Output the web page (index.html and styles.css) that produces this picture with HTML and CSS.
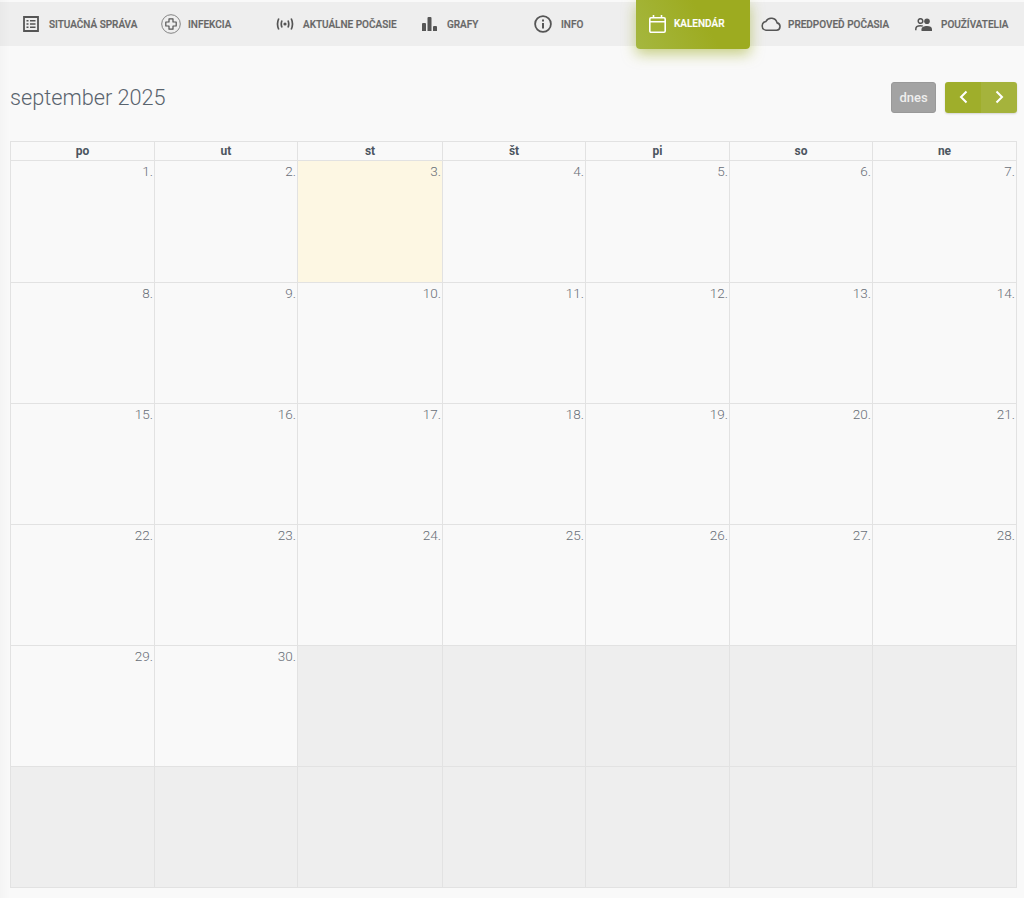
FILE: index.html
```html
<!DOCTYPE html>
<html lang="sk">
<head>
<meta charset="utf-8">
<title>Kalendár</title>
<link rel="stylesheet" href="styles.css">
</head>
<body>
<nav class="nav">
  <a class="item w1"><svg class="ic" width="16" height="16" viewBox="0 0 16 16"><path fill="none" stroke="#555" stroke-width="1.800" d="M1 1h14v14H1z"/><path fill="#555" d="M3.500 4h2v1.600h-2zM7 4h5.500v1.600H7zM3.500 7.200h2v1.600h-2zM7 7.200h5.500v1.600H7zM3.500 10.400h2V12h-2zM7 10.400h5.500V12H7z"/></svg><span>Situačná správa</span></a>
  <a class="item w2"><svg class="ic" width="20" height="20" viewBox="0 0 20 20"><circle cx="10" cy="10" r="9.300" fill="none" stroke="#777" stroke-width=".9"/><path fill="none" stroke="#555" stroke-width="1.200" stroke-linejoin="round" d="M8 4.800h4V8h3.200v4H12v3.200H8V12H4.800V8H8z"/></svg><span>Infekcia</span></a>
  <a class="item w3"><svg class="ic" width="18" height="12" viewBox="0 0 18 12"><circle cx="9" cy="6" r="1.600" fill="#555"/><path fill="none" stroke="#555" stroke-width="1.700" d="M6 2.500Q4.500 6 6 9.500M12 2.500Q13.500 6 12 9.500M2.800.5Q.2 6 2.800 11.500M15.200.5Q17.800 6 15.200 11.500"/></svg><span>Aktuálne počasie</span></a>
  <a class="item w4"><svg class="ic" width="15" height="14" viewBox="0 0 15 14"><path fill="#555" d="M0 7a1 1 0 0 1 1-1h2a1 1 0 0 1 1 1v7H0zM5.500 1a1 1 0 0 1 1-1h2a1 1 0 0 1 1 1v13h-4zM11 10a1 1 0 0 1 1-1h2a1 1 0 0 1 1 1v4h-4z"/></svg><span>Grafy</span></a>
  <a class="item w5"><svg class="ic" width="18" height="18" viewBox="0 0 18 18"><circle cx="9" cy="9" r="7.900" fill="none" stroke="#555" stroke-width="1.800"/><path fill="#555" d="M8 8h2v5.500H8zM8 4.500h2v2H8z"/></svg><span>Info</span></a>
  <a class="item active"><svg class="ic" width="17" height="18" viewBox="0 0 17 18"><path fill="none" stroke="#fff" stroke-width="1.600" d="M2 2.800h13a1.200 1.200 0 0 1 1.200 1.200v12a1.200 1.200 0 0 1-1.200 1.200H2A1.200 1.200 0 0 1 .8 16V4A1.200 1.200 0 0 1 2 2.800zM.8 6.800h15.400M4.500 0v3.500M12.500 0v3.500"/></svg><span>Kalendár</span></a>
  <a class="item w7"><svg class="ic" width="20" height="14" viewBox="0 0 20 14"><path fill="none" stroke="#555" stroke-width="1.600" d="M5 13.200h10.500a3.700 3.700 0 0 0 .6-7.300A6 6 0 0 0 4.900 4.500 4.400 4.400 0 0 0 5 13.200z"/></svg><span>Predpoveď počasia</span></a>
  <a class="item w8"><svg class="ic" width="17" height="13" viewBox="0 0 17 13"><circle cx="5.500" cy="3" r="2.300" fill="none" stroke="#555" stroke-width="1.500"/><circle cx="12" cy="3.200" r="2.800" fill="#555"/><path fill="none" stroke="#555" stroke-width="1.500" d="M.8 12.300v-1.300c0-2 2-3.200 4.700-3.200 1 0 1.700.1 2.300.4"/><path fill="#555" d="M6.500 13v-1.800c0-2 2.500-3.200 5.500-3.200s5 1.200 5 3.200V13z"/></svg><span>Používatelia</span></a>
</nav>
<main class="main">
  <header class="toolbar">
    <h1 class="title">september 2025</h1>
    <div class="actions">
      <button class="btn today">dnes</button>
      <div class="group">
        <button class="btn arrow"><svg width="9" height="14" viewBox="0 0 9 14"><path fill="none" stroke="#fff" stroke-width="2" d="M7.500 1.500 2 7l5.500 5.500"/></svg></button>
        <button class="btn arrow light"><svg width="9" height="14" viewBox="0 0 9 14"><path fill="none" stroke="#fff" stroke-width="2" d="M1.500 1.500 7 7l-5.500 5.500"/></svg></button>
      </div>
    </div>
  </header>
  <table class="cal">
    <thead><tr><th>po</th><th>ut</th><th>st</th><th>št</th><th>pi</th><th>so</th><th>ne</th></tr></thead>
    <tbody>
      <tr><td>1.</td><td>2.</td><td class="now">3.</td><td>4.</td><td>5.</td><td>6.</td><td>7.</td></tr>
      <tr><td>8.</td><td>9.</td><td>10.</td><td>11.</td><td>12.</td><td>13.</td><td>14.</td></tr>
      <tr><td>15.</td><td>16.</td><td>17.</td><td>18.</td><td>19.</td><td>20.</td><td>21.</td></tr>
      <tr><td>22.</td><td>23.</td><td>24.</td><td>25.</td><td>26.</td><td>27.</td><td>28.</td></tr>
      <tr><td>29.</td><td>30.</td><td class="off"></td><td class="off"></td><td class="off"></td><td class="off"></td><td class="off"></td></tr>
      <tr><td class="off"></td><td class="off"></td><td class="off"></td><td class="off"></td><td class="off"></td><td class="off"></td><td class="off"></td></tr>
    </tbody>
  </table>
</main>
</body>
</html>
```
FILE: styles.css
```css
* { box-sizing: border-box; }
html, body { margin: 0; height: 898px; overflow: hidden; }
body { background: linear-gradient(90deg, #f4f4f4, #f9f9f9 10px); font-family: Roboto, "Liberation Sans", sans-serif; color: #555; }
.nav { display: flex; height: 44px; margin-top: 2px; background: linear-gradient(90deg, #e9e9e9, #eee 10px); align-items: center; padding-left: 23px; }
.item { display: flex; align-items: center; gap: 10px; font-size: 10px; font-weight: 500; -webkit-text-stroke: .2px currentColor; text-transform: uppercase; color: #666; white-space: nowrap; }
.w1 { width: 138px; }
.w2 { width: 115px; gap: 7px; }
.w3 { width: 146px; gap: 9px; }
.w4 { width: 112px; }
.w5 { width: 102px; gap: 9px; }
.w7 { width: 154px; gap: 7px; }
.w8 { gap: 9px; }
.active { width: 114px; height: 49px; margin: -2px 11px 3px 0; align-self: flex-start; padding: 0 0 2px 13px; gap: 8px; border-radius: 0 0 4px 4px; color: #fff; background: linear-gradient(60deg, #a5b73f, #9dab20 60%); box-shadow: 0 5px 14px rgba(157, 171, 32, .55); position: relative; }
.main { padding: 0 7px 0 10px; }
.toolbar { display: flex; justify-content: space-between; align-items: center; height: 95px; padding-top: 8px; }
.title { margin: 0; font-size: 21.700px; font-weight: 300; color: #5a646e; }
.actions { display: flex; gap: 9px; align-items: center; padding-bottom: 1px; }
.btn { border: 0; height: 31px; font: 500 13px Roboto, sans-serif; color: #fff; display: flex; align-items: center; justify-content: center; }
.today { width: 45px; background: #a3a3a3; border: 1px solid #999; border-radius: 3px; color: #eee; }
.group { display: flex; border-radius: 3px; overflow: hidden; box-shadow: 0 1px 2px rgba(0,0,0,.15); }
.arrow { width: 36px; background: #9fae2b; }
.light { background: #a5b33c; }
.cal { width: 1007px; table-layout: fixed; border-collapse: collapse; }
.cal th, .cal td { border: 1px solid #e2e2e2; }
.cal th { height: 19px; width: 144px; padding: 0; font-size: 12px; font-weight: 700; color: #4c5560; line-height: 1; }
.cal th:nth-child(2), .cal th:nth-child(4), .cal th:nth-child(6) { width: 143px; }
.cal th:nth-child(3) { width: 145px; }
.cal td { height: 121px; padding: 2px 1px 0 0; vertical-align: top; text-align: right; font-size: 13.500px; font-weight: 300; color: #686e77; }
.cal tbody tr:first-child td { height: 122px; }
.now { background: #fdf7e3; }
.off { background: #eee; }
```
